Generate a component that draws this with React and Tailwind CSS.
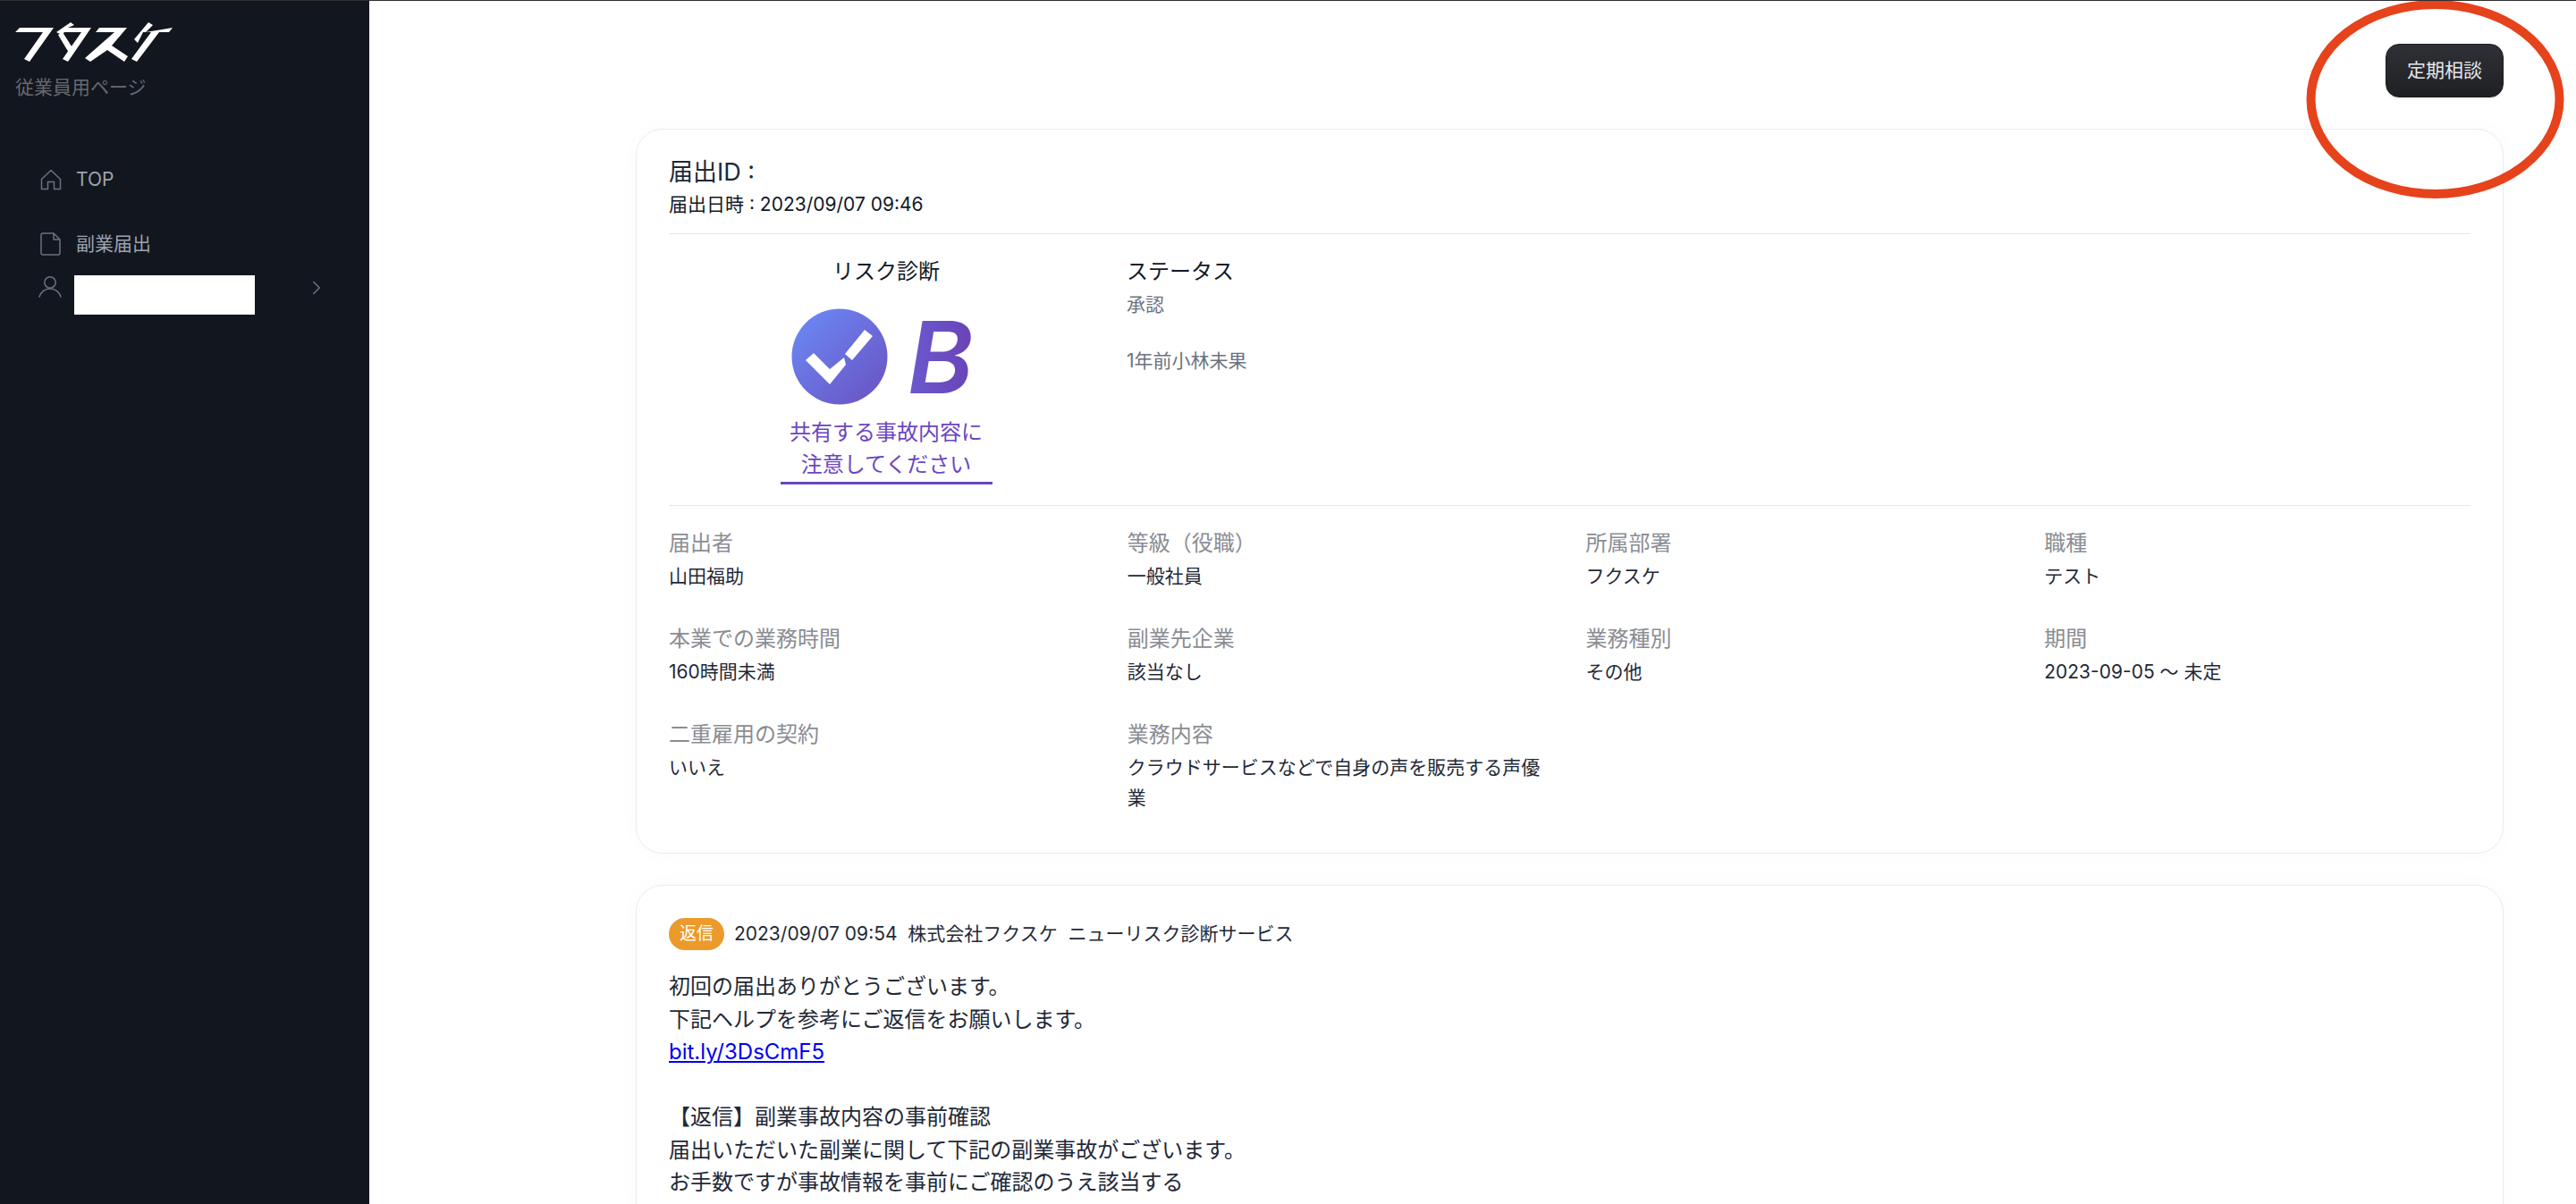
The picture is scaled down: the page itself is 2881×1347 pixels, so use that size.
import { ChevronRight } from "lucide-react";

const font = { };

const infoRows = [
  [
    ["届出者", "山田福助"],
    ["等級（役職）", "一般社員"],
    ["所属部署", "フクスケ"],
    ["職種", "テスト"],
  ],
  [
    ["本業での業務時間", "160時間未満"],
    ["副業先企業", "該当なし"],
    ["業務種別", "その他"],
    ["期間", "2023-09-05 〜 未定"],
  ],
  [
    ["二重雇用の契約", "いいえ"],
    ["業務内容", "クラウドサービスなどで自身の声を販売する声優業"],
  ],
];

const Logo = () => (
  <svg width="176" height="46" viewBox="0 0 176 46" fill="#fff" className="block">
    <polygon points="0,11 5,6 43,6 16,44 10,41 31,11" />
    <polygon points="46,11 62,0 66,3 59,6 85,6 59,44 53,41 74,11 55,11 52,14" />
    <polygon points="48,14 53,11 65,30 60,34" />
    <polygon points="94,6 125,6 108,26 126,38 122,44 103,31 84,44 78,40 111,11 90,11" />
    <polygon points="133,19 149,0 154,3 146,11 176,6 172,11 161,11 136,44 130,41 152,11 143,11 137,23" />
  </svg>
);

const HomeIcon = () => (
  <svg width="24" height="24" viewBox="0 0 24 24" fill="none" stroke="#6b7280" strokeWidth="1.5" strokeLinejoin="round" strokeLinecap="round">
    <path d="M1.5 11.5 12 1.5l10.5 10v11h-7v-8h-7v8h-7z" />
  </svg>
);

const FileIcon = () => (
  <svg width="24" height="26" viewBox="0 0 24 26" fill="none" stroke="#6b7280" strokeWidth="1.5" strokeLinejoin="round">
    <path d="M3 1h12l7 7v15a2 2 0 0 1-2 2H3a2 2 0 0 1-2-2V3a2 2 0 0 1 2-2z" />
    <path d="M15 1v7h7" />
  </svg>
);

const UserIcon = () => (
  <svg width="26" height="24" viewBox="0 0 26 24" fill="none" stroke="#6b7280" strokeWidth="1.5" strokeLinecap="round">
    <circle cx="13" cy="7" r="6.2" />
    <path d="M1 23c1.5-5 6-9 12-9s10.5 4 12 9" />
  </svg>
);

const RiskBadge = () => (
  <svg width="108" height="108" viewBox="0 0 108 108" className="block">
    <defs>
      <linearGradient id="riskGrad" x1="0" y1="0" x2="1" y2="1">
        <stop offset="0" stopColor="#6b8cf8" />
        <stop offset="1" stopColor="#6a50c0" />
      </linearGradient>
    </defs>
    <circle cx="54" cy="54" r="53.5" fill="url(#riskGrad)" />
    <polygon points="16,61 25,53 43,71 59,58 61,66 43,88" fill="#fff" transform="translate(0,-3)" />
    <polygon points="60,51 82,24 91,31 68,58" fill="#fff" />
  </svg>
);

export default function App() {
  return (
    <div className="relative flex h-[1347px] w-[2881px] overflow-hidden bg-white font-['Inter','Noto_Sans_CJK_JP',sans-serif] text-[21px] text-[#1f2937]">
      <div className="absolute inset-x-0 top-0 z-20 h-px bg-[#2f2f31]" />

      <aside className="flex w-[413px] shrink-0 flex-col bg-[#12161f] pt-[25px]">
        <div className="pl-[17px]">
          <Logo />
        </div>
        <p className="mt-[14px] pl-[17px] text-[21px] leading-[26px] text-[#666a6e]">従業員用ページ</p>
        <nav className="mt-[54px] flex flex-col text-[#9ca3af]">
          <a className="flex h-[72px] items-center gap-[16px] pl-[45px]">
            <HomeIcon />
            <span>TOP</span>
          </a>
          <a className="flex h-[72px] items-center gap-[16px] pl-[45px]">
            <FileIcon />
            <span>副業届出</span>
          </a>
          <div className="flex items-start pl-[43px] pr-[46px]">
            <div className="flex flex-1 items-start gap-[14px]">
              <UserIcon />
              <div className="-mt-px h-[44px] w-[202px] bg-white" />
            </div>
            <ChevronRight size={26} strokeWidth={1.5} className="text-[#6b7280]" />
          </div>
        </nav>
      </aside>

      <main className="min-w-0 flex-1">
        <div className="flex justify-end pr-[81px] pt-[49px]">
          <button className="h-[60px] w-[132px] rounded-[15px] border border-[#1b1c1f] bg-linear-to-b from-[#2f3136] to-[#1f2023] text-[21px] text-[#e5e7eb] shadow-sm">
            定期相談
          </button>
        </div>

        <div className="ml-[298px] mr-[81px] mt-[35px] flex flex-col gap-[35px]">
          <section className="h-[811px] rounded-[30px] border border-[#ececec] bg-white px-[36px] pt-[30px] shadow-[0_0_24px_rgba(0,0,0,0.025)]">
            <h2 className="text-[27px] leading-[36px]">届出ID :</h2>
            <p className="leading-[36px] text-[#111827]">届出日時 : 2023/09/07 09:46</p>
            <hr className="mt-[14px] border-[#e5e7eb]" />

            <div className="flex h-[303px] pt-[24px]">
              <div className="flex w-[486px] flex-col items-center">
                <p className="text-[24px] leading-[36px] text-[#111827]">リスク診断</p>
                <div className="mt-[23px] flex items-center gap-[22px]">
                  <RiskBadge />
                  <span className="bg-linear-to-r from-[#6a5acd] to-[#6a3fb5] bg-clip-text pr-[8px] text-[112px] font-semibold italic leading-[107px] text-transparent">B</span>
                </div>
                <div className="mt-[13px] w-[237px] border-b-[3px] border-[#6b46c1] pb-[1px] text-center text-[24px] leading-[36px] text-[#6b46c1]">
                  共有する事故内容に<br />注意してください
                </div>
              </div>
              <div className="ml-[26px]">
                <p className="text-[24px] leading-[36px] text-[#111827]">ステータス</p>
                <p className="mt-px leading-[36px] text-[#6b7280]">承認</p>
                <p className="mt-[27px] leading-[36px] text-[#6b7280]">1年前小林未果</p>
              </div>
            </div>
            <hr className="border-[#e5e7eb]" />

            <div className="mt-[24px] grid grid-cols-4 gap-x-[36px] gap-y-[35px]">
              {infoRows.flat().map(([label, value]) => (
                <div key={label}>
                  <p className="text-[24px] leading-[36px] text-[#8a8d93]">{label}</p>
                  <p className="mt-[2px] leading-[34px] text-[#1f2937]">{value}</p>
                </div>
              ))}
            </div>
          </section>

          <section className="rounded-[30px] border border-[#ececec] bg-white px-[36px] pt-[36px] shadow-[0_0_24px_rgba(0,0,0,0.025)]">
            <div className="flex items-center gap-[11px] leading-[36px]">
              <span className="flex h-[36px] w-[62px] items-center justify-center rounded-full bg-[#ec9a2c] text-[19px] text-white">返信</span>
              <span className="whitespace-pre">2023/09/07 09:54  株式会社フクスケ  ニューリスク診断サービス</span>
            </div>
            <div className="mt-[23px] text-[24px] leading-[36.5px] text-[#1f2937]">
              <p>初回の届出ありがとうございます。</p>
              <p>下記ヘルプを参考にご返信をお願いします。</p>
              <p><a className="text-[#0000ee] underline">bit.ly/3DsCmF5</a></p>
              <p>&nbsp;</p>
              <p>【返信】副業事故内容の事前確認</p>
              <p>届出いただいた副業に関して下記の副業事故がございます。</p>
              <p>お手数ですが事故情報を事前にご確認のうえ該当する</p>
              <p>事故の対策をお願いいたします。</p>
            </div>
          </section>
        </div>
      </main>

      <svg width="289" height="224" viewBox="0 0 289 224" className="absolute left-[2579px] top-[-1px] z-10" fill="none">
        <ellipse cx="144.5" cy="112" rx="139" ry="106" stroke="#e6421c" strokeWidth="10" />
      </svg>
    </div>
  );
}
